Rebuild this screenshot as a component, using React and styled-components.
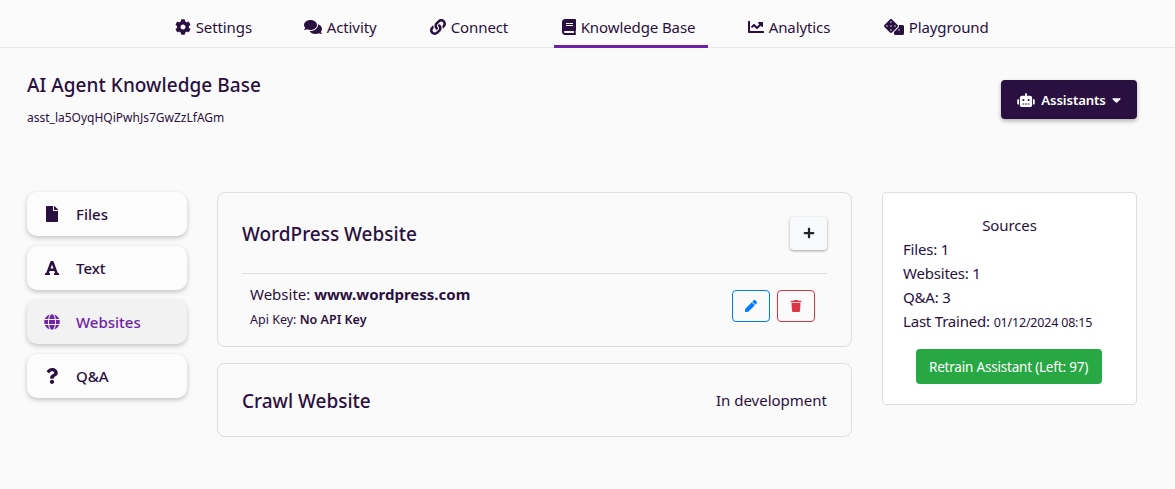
import React from "react";
import styled, { createGlobalStyle } from "styled-components";
import { FaCog, FaComments, FaLink, FaBook, FaChartLine, FaRobot, FaCaretDown, FaFile, FaFont, FaGlobe, FaQuestion, FaPlus, FaPen, FaTrash, FaDice } from "react-icons/fa";

const Global = createGlobalStyle`
  * { box-sizing: border-box; }
  html, body { margin: 0; padding: 0; background: #fafafa; }
  body { font-family: "Noto Sans", "Open Sans", sans-serif; color: #2a1040; overflow: hidden; }
`;
const Page = styled.div`width: 1175px; height: 489px; background: #fafafa;`;
const Nav = styled.nav`
  display: flex; gap: 32px; height: 48px; padding-left: 167px;
  border-bottom: 1px solid #e9e9ec; background: #fbfbfb;
`;
const Tab = styled.a`
  display: flex; align-items: center; gap: 4.7px; height: 48px; width: ${p => p.$w}px; padding-left: 8px;
  font-size: 15px; white-space: nowrap; letter-spacing: -0.1px; padding-top: 9px;
  border-bottom: 3px solid ${p => (p.$active ? "#6f22a8" : "transparent")};
  svg { height: 16px; width: ${p => p.$iw}px; flex: none; }
`;
const Content = styled.div`padding: 0 38px 0 27px;`;
const Header = styled.header`
  display: flex; justify-content: space-between; align-items: flex-start; height: 144px; padding-top: 24px;
`;
const Title = styled.h1`margin: 0; font-size: 19px; line-height: 26px; font-weight: 500; letter-spacing: 0.05px;`;
const Sub = styled.div`margin-top: 12px; font-size: 12px; line-height: 16px;`;
const DarkButton = styled.button`
  width: 136px; height: 39px; margin-top: 8px; border: 0; border-radius: 4px; background: #2a1040; color: #fff;
  display: flex; align-items: center; justify-content: center; gap: 6px; padding: 0; font: 600 13.2px "Noto Sans", sans-serif;
  letter-spacing: -0.1px; box-shadow: 0 2px 4px rgba(0,0,0,.3);
  svg { height: 14px; flex: none; }
  svg:first-child { width: 18px; }
  svg:last-child { width: 9px; }
`;
const Columns = styled.div`display: grid; grid-template-columns: 160px 635px 255px; column-gap: 30px; align-items: start;`;
const Side = styled.div`display: flex; flex-direction: column; gap: 10px;`;
const SideItem = styled.div`
  height: 44px; border-radius: 10px; display: flex; align-items: center; padding-left: 17px;
  background: ${p => (p.$active ? "#f2f2f2" : "#fcfcfc")}; color: ${p => (p.$active ? "#6f22a8" : "#2a1040")};
  font-size: 15px; font-weight: 500; box-shadow: 0 2px 5px rgba(0,0,0,.22);
`;
const SideIcon = styled.span`width: 16px; display: flex; justify-content: center; font-size: 16px; margin-right: 16px;`;
const SideLabel = styled.span`margin-top: -1px;`;
const Stack = styled.div`display: flex; flex-direction: column; gap: 16px;`;
const Card = styled.section`border: 1px solid #dedede; border-radius: 8px; background: #fafafa; padding: 0 24px;`;
const CardHead = styled.div`
  display: flex; justify-content: space-between; align-items: center; height: ${p => p.$h}px;
`;
const CardTitle = styled.h2`margin: 2px 0 0; font-size: 19px; font-weight: 500;`;
const PlusButton = styled.button`
  width: 37px; height: 33px; border: 0; border-radius: 4px; background: #f8f9fa; color: #212529; display: flex;
  align-items: center; justify-content: center; font-size: 12px; box-shadow: 0 1px 3px rgba(0,0,0,.35);
`;
const Row = styled.div`
  display: flex; justify-content: space-between; align-items: flex-start; border-top: 1px solid #dedede;
  height: 73px; padding: 0 12px 0 8px;
`;
const Details = styled.div`padding-top: 9px;`;
const Site = styled.div`font-size: 15px; line-height: 22px; strong { font-weight: 700; }`;
const Api = styled.div`font-size: 12.5px; line-height: 22px; margin-top: 4px; strong { font-weight: 600; }`;
const Actions = styled.div`display: flex; gap: 7px; margin-top: 16px;`;
const Outline = styled.button`
  width: 38px; height: 32px; background: transparent; border: 1px solid ${p => p.$c}; color: ${p => p.$c};
  border-radius: 4px; display: flex; align-items: center; justify-content: center; font-size: 12px;
`;
const Note = styled.span`font-size: 15px;`;
const Aside = styled.aside`
  border: 1px solid #dedede; border-radius: 4px; background: #fff; height: 213px; padding: 20px 22px 0 20px;
`;
const AsideTitle = styled.div`text-align: center; font-size: 15px; line-height: 24px; letter-spacing: -0.1px; padding-left: 2px;`;
const Stat = styled.div`font-size: 15px; line-height: 24px; letter-spacing: -0.2px; small { font-size: 12.5px; }`;
const Retrain = styled.button`
  display: block; width: 186px; height: 35px; margin: 14px auto 0; border: 0; border-radius: 4px; background: #28a745;
  color: #fff; font: 13.5px "Noto Sans", sans-serif; letter-spacing: -0.2px; padding: 0;
`;

const tabs = [
  ["Settings", FaCog, 97, 16], ["Activity", FaComments, 94, 18], ["Connect", FaLink, 100, 16],
  ["Knowledge Base", FaBook, 154, 14], ["Analytics", FaChartLine, 104, 16], ["Playground", FaDice, 124, 20],
];
const items = [["Files", FaFile], ["Text", FaFont], ["Websites", FaGlobe], ["Q&A", FaQuestion]];

export default function App() {
  return (
    <Page>
      <Global />
      <Nav>
        {tabs.map(([label, Icon, w, iw]) => (
          <Tab key={label} $w={w} $iw={iw} $active={label === "Knowledge Base"}><Icon />{label}</Tab>
        ))}
      </Nav>
      <Content>
        <Header>
          <div>
            <Title>AI Agent Knowledge Base</Title>
            <Sub>asst_la5OyqHQiPwhJs7GwZzLfAGm</Sub>
          </div>
          <DarkButton><FaRobot />Assistants<FaCaretDown /></DarkButton>
        </Header>
        <Columns>
          <Side>
            {items.map(([label, Icon]) => (
              <SideItem key={label} $active={label === "Websites"}>
                <SideIcon><Icon /></SideIcon><SideLabel>{label}</SideLabel>
              </SideItem>
            ))}
          </Side>
          <Stack>
            <Card>
              <CardHead $h={80}><CardTitle>WordPress Website</CardTitle><PlusButton><FaPlus /></PlusButton></CardHead>
              <Row>
                <Details>
                  <Site>Website: <strong>www.wordpress.com</strong></Site>
                  <Api>Api Key: <strong>No API Key</strong></Api>
                </Details>
                <Actions>
                  <Outline $c="#007bff"><FaPen /></Outline>
                  <Outline $c="#dc3545"><FaTrash /></Outline>
                </Actions>
              </Row>
            </Card>
            <Card>
              <CardHead $h={72}><CardTitle>Crawl Website</CardTitle><Note>In development</Note></CardHead>
            </Card>
          </Stack>
          <Aside>
            <AsideTitle>Sources</AsideTitle>
            <Stat>Files: 1</Stat>
            <Stat>Websites: 1</Stat>
            <Stat>Q&amp;A: 3</Stat>
            <Stat>Last Trained: <small>01/12/2024 08:15</small></Stat>
            <Retrain>Retrain Assistant (Left: 97)</Retrain>
          </Aside>
        </Columns>
      </Content>
    </Page>
  );
}
